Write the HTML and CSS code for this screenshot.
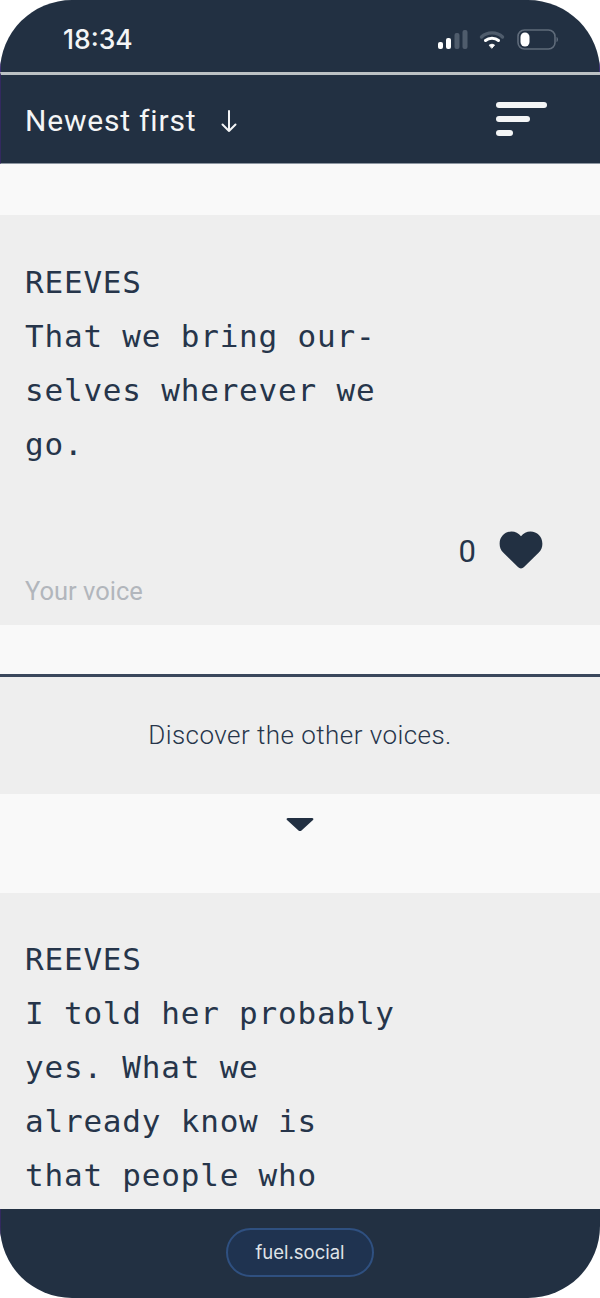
FILE: index.html
```html
<!DOCTYPE html>
<html lang="en">
<head>
<meta charset="utf-8">
<title>Newest first</title>
<link rel="stylesheet" href="styles.css">
</head>
<body>
<div class="phone">
  <div class="status">
    <span class="time">18:34</span>
    <div class="status-icons">
      <svg class="signal" width="30" height="20" viewBox="0 0 30 20">
        <rect x="0" y="12" width="5" height="7" rx="2" fill="#fff"/>
        <rect x="8" y="8" width="5" height="11" rx="2" fill="#fff"/>
        <rect x="16.500" y="3" width="5" height="16" rx="2" fill="#4f5c6c"/>
        <rect x="24.500" y="0" width="5" height="19" rx="2" fill="#4f5c6c"/>
      </svg>
      <svg class="wifi" width="26" height="20" viewBox="0 0 26 20" fill="none" stroke-linecap="round">
        <path d="M2.500 7 C8 1.500 18 1.500 23.500 7" stroke="#4f5c6c" stroke-width="3.400"/>
        <path d="M6.500 10.500 C10 7.500 16 7.500 19.500 10.500" stroke="#fff" stroke-width="3"/>
        <path d="M10.500 15 C12 14 14 14 15.500 15 L13 18 Z" fill="#fff" stroke="#fff" stroke-width="1"/>
      </svg>
      <svg class="battery" width="42" height="22" viewBox="0 0 42 22">
        <rect x="1" y="1" width="37" height="19" rx="6.500" fill="none" stroke="#5f6b7a" stroke-width="1.600"/>
        <rect x="3.500" y="3.500" width="9" height="14" rx="4.500" fill="#fff"/>
        <path d="M39.500 8 C41.500 8.500 41.500 12.500 39.500 13 Z" fill="#5f6b7a"/>
      </svg>
    </div>
  </div>
  <header class="topbar">
    <div class="sort"><span>Newest first</span>
      <svg class="arrow" width="16" height="24" viewBox="0 0 16 24" fill="none" stroke="#f4f5f6" stroke-width="2" stroke-linecap="round" stroke-linejoin="round"><path d="M8 2 V22 M1.500 15.500 L8 22 L14.500 15.500"/></svg>
    </div>
    <div class="menu"><i class="bar bar-l"></i><i class="bar bar-m"></i><i class="bar bar-s"></i></div>
  </header>
  <main class="content">
    <section class="card first">
      <p class="speaker">REEVES</p>
      <p class="line">That we bring our-<br>selves wherever we<br>go.</p>
      <div class="likes">
        <span class="count">0</span>
        <svg class="heart" width="44" height="38" viewBox="0 0 46 40"><path d="M23 39.500 C21.800 39.500 20.800 38.900 19.800 38 L4.500 22.800 C1.500 19.800 0.500 16.800 0.500 13.300 C0.500 6 6 0.500 13 0.500 C17 0.500 20.500 2.200 23 5.500 C25.500 2.200 29 0.500 33 0.500 C40 0.500 45.500 6 45.500 13.300 C45.500 16.800 44.500 19.800 41.500 22.800 L26.200 38 C25.200 38.900 24.200 39.500 23 39.500 Z" fill="#223042"/></svg>
      </div>
      <p class="voice">Your voice</p>
    </section>
    <div class="discover">Discover the other voices.</div>
    <div class="caret-row"><svg width="28" height="15" viewBox="0 0 28 15"><path d="M2 1 H26 C27.500 1 27.800 2.300 27 3 L15.500 13.500 C14.700 14.200 13.300 14.200 12.500 13.500 L1 3 C0.200 2.300 0.500 1 2 1 Z" fill="#223042"/></svg></div>
    <section class="card second">
      <p class="speaker">REEVES</p>
      <p class="line">I told her probably<br>yes. What we<br>already know is<br>that people who</p>
    </section>
  </main>
  <footer class="foot"><span class="pill">fuel.social</span></footer>
</div>
</body>
</html>
```
FILE: styles.css
```css
* { box-sizing: border-box; }
html, body { margin: 0; padding: 0; background: #fff; }
p { margin: 0; }
.phone {
  width: 600px;
  height: 1298px;
  border-radius: 72px;
  overflow: hidden;
  display: flex;
  flex-direction: column;
  background: #f9f9f9;
  color: #26354a;
}
.status {
  height: 72px;
  flex: none;
  background: #223042;
  display: flex;
  justify-content: space-between;
  align-items: center;
  padding: 7px 40px 0 62px;
  border-left: 1px solid #3e2c78;
  border-right: 1px solid #3e2c78;
}
.time {
  font: 500 26.500px/1 "Inter", sans-serif;
  color: #f4f5f6;
}
.status-icons { display: flex; align-items: center; gap: 11px; }
.battery { margin-left: 1px; }
.topbar {
  height: 92px;
  flex: none;
  background: #223042;
  border-top: 3px solid #bcc1c4;
  border-bottom: 1px solid #8d96a1;
  border-left: 1px solid #33295f;
  display: flex;
  align-items: center;
  justify-content: space-between;
  padding: 4px 53px 0 24px;
  color: #f4f5f6;
}
.sort {
  display: flex;
  align-items: center;
  gap: 25px;
  font: 400 30px/1 "Roboto", sans-serif;
  letter-spacing: 0.8px;
}
.menu { display: flex; flex-direction: column; gap: 8px; width: 51px; margin-top: -4px; }
.bar { display: block; height: 6px; border-radius: 3px; background: #f4f5f6; }
.bar-l { width: 51px; }
.bar-m { width: 34px; }
.bar-s { width: 17px; }
.content { flex: 1; min-height: 0; overflow: hidden; padding-top: 51px; }
.card { background: #eee; padding: 40px 25px 0; }
.first { height: 410px; }
.second { height: 316px; padding-top: 39px; overflow: hidden; }
.speaker, .line {
  font: 500 31px/54px "DejaVu Sans Mono", monospace;
  letter-spacing: 0.8px;
}
.likes {
  display: flex;
  align-items: center;
  justify-content: flex-end;
  gap: 22px;
  margin: 60px 32px 0 0;
}
.count { font: 400 31px/1 "Roboto", sans-serif; padding-top: 3px; }
.heart { margin-left: 1px; }
.voice { font: 400 25.500px/1 "Roboto", sans-serif; color: #b2b6bc; margin-top: 10px; }
.discover {
  height: 120px;
  margin-top: 49px;
  background: #eee;
  border-top: 3px solid #3a475c;
  text-align: center;
  font: 300 26px/116px "Roboto", sans-serif;
  letter-spacing: 0.45px;
}
.caret-row { height: 99px; display: flex; justify-content: center; padding-top: 23px; }
.foot {
  height: 89px;
  flex: none;
  background: #223042;
  display: flex;
  align-items: center;
  justify-content: center;
  padding: 0 1px 2px 0;
  border-left: 1px solid #33295f;
}
.pill {
  width: 148px;
  height: 49px;
  border-radius: 25px;
  border: 2px solid #2f5080;
  background: #1f3350;
  color: #dfe3e7;
  font: 400 18.500px/45px "Inter", sans-serif;
  text-align: center;
}
```
